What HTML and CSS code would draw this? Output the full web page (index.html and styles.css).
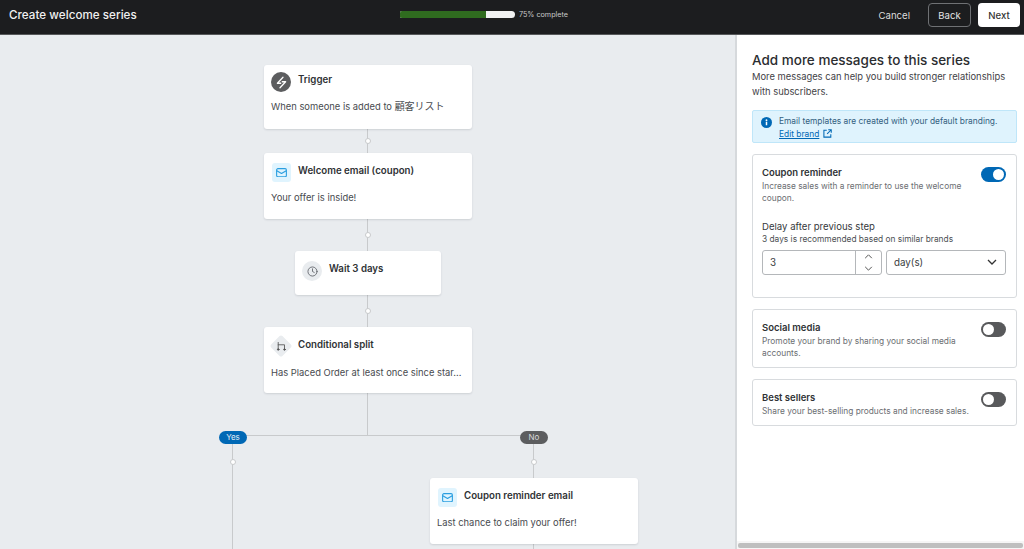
FILE: index.html
```html
<!DOCTYPE html>
<html lang="en">
<head>
<meta charset="utf-8">
<title>Create welcome series</title>
<link rel="stylesheet" href="styles.css">
</head>
<body>
<header class="topbar">
  <div class="title">Create welcome series</div>
  <div class="progress">
    <div class="track"><div class="fill"></div></div>
    <span class="progress-label">75% complete</span>
  </div>
  <div class="actions">
    <span class="cancel">Cancel</span>
    <span class="btn btn-back">Back</span>
    <span class="btn btn-next">Next</span>
  </div>
</header>
<main class="main">
  <section class="canvas">
    <div class="line line-v l1"></div>
    <div class="line line-h l3"></div>
    <div class="line line-v l4"></div>
    <div class="line line-v l5"></div>
    <div class="dot d1"></div>
    <div class="dot d2"></div>
    <div class="dot d3"></div>
    <div class="dot d4"></div>
    <div class="dot d5"></div>
    <div class="pill pill-yes">Yes</div>
    <div class="pill pill-no">No</div>

    <div class="node n-trigger">
      <div class="node-head">
        <span class="ico ico-trigger"><svg viewBox="0 0 20 20" width="15" height="15" fill="none" stroke="#fff" stroke-width="1.7" stroke-linejoin="round" stroke-linecap="round"><path d="M12 3 4.500 11H9M8 17l7.500-8H11"/></svg></span>
        <span class="node-title">Trigger</span>
      </div>
      <div class="node-text">When someone is added to <span class="cjk">顧客リスト</span></div>
    </div>

    <div class="node n-welcome">
      <div class="node-head">
        <span class="ico ico-mail"><svg viewBox="0 0 14 12" width="11" height="9.500" fill="none" stroke="#2a9ee0" stroke-width="1.4" stroke-linejoin="round"><rect x=".8" y=".8" width="12.4" height="10.4" rx="1.6"/><path d="M1 3.400 7 7l6-3.600"/></svg></span>
        <span class="node-title">Welcome email (coupon)</span>
      </div>
      <div class="node-text">Your offer is inside!</div>
    </div>

    <div class="node n-wait">
      <div class="node-head">
        <span class="ico ico-clock"><svg viewBox="0 0 14 14" width="11" height="11" fill="none" stroke="#5f6368" stroke-width="1.1" stroke-linecap="round"><circle cx="7" cy="7" r="5.8"/><path d="M7 3.600V7l2.200 1.200"/></svg></span>
        <span class="node-title">Wait 3 days</span>
      </div>
    </div>

    <div class="node n-split">
      <div class="node-head">
        <span class="ico ico-split"><svg class="split-svg" viewBox="0 0 14 12" width="11" height="10" fill="none" stroke="#555" stroke-width="1.1" stroke-linecap="round" stroke-linejoin="round"><path d="M3 1v9M3 4h8v6"/><circle cx="3" cy="10" r="1" fill="#555"/><circle cx="11" cy="10" r="1" fill="#555"/></svg></span>
        <span class="node-title">Conditional split</span>
      </div>
      <div class="node-text">Has Placed Order at least once since star...</div>
    </div>

    <div class="node n-reminder">
      <div class="node-head">
        <span class="ico ico-mail"><svg viewBox="0 0 14 12" width="11" height="9.500" fill="none" stroke="#2a9ee0" stroke-width="1.4" stroke-linejoin="round"><rect x=".8" y=".8" width="12.4" height="10.4" rx="1.6"/><path d="M1 3.400 7 7l6-3.600"/></svg></span>
        <span class="node-title">Coupon reminder email</span>
      </div>
      <div class="node-text">Last chance to claim your offer!</div>
    </div>
  </section>

  <aside class="panel">
    <h1 class="panel-title">Add more messages to this series</h1>
    <p class="panel-sub">More messages can help you build stronger relationships with subscribers.</p>

    <div class="banner">
      <svg class="banner-ico" viewBox="0 0 12 12" width="11" height="11"><circle cx="6" cy="6" r="6" fill="#0068b5"/><rect x="5.200" y="5.200" width="1.600" height="3.800" fill="#fff"/><circle cx="6" cy="3.500" r="1" fill="#fff"/></svg>
      <div class="banner-text">
        <div>Email templates are created with your default branding.</div>
        <div class="banner-link"><a class="edit-link">Edit brand</a>
          <svg viewBox="0 0 12 12" width="9" height="9" fill="none" stroke="#0068b5" stroke-width="1.4"><path d="M5 1.600H1.200v9.200h9.200V7M7 1h4v4M11 1 5.500 6.500"/></svg>
        </div>
      </div>
    </div>

    <div class="card card-coupon">
      <div class="card-head">
        <div class="card-copy">
          <div class="card-title">Coupon reminder</div>
          <div class="card-desc">Increase sales with a reminder to use the welcome coupon.</div>
        </div>
        <span class="toggle toggle-on"></span>
      </div>
      <div class="delay-title">Delay after previous step</div>
      <div class="delay-sub">3 days is recommended based on similar brands</div>
      <div class="delay-row">
        <div class="field num-field">
          <span class="num-value">3</span>
          <span class="stepper">
            <svg viewBox="0 0 10 6" width="9" height="5" fill="none" stroke="#444" stroke-width="1.1"><path d="M1 5 5 1l4 4"/></svg>
            <svg viewBox="0 0 10 6" width="9" height="5" fill="none" stroke="#444" stroke-width="1.1"><path d="M1 1l4 4 4-4"/></svg>
          </span>
        </div>
        <div class="field sel-field">
          <span>day(s)</span>
          <svg viewBox="0 0 10 6" width="10" height="6" fill="none" stroke="#333" stroke-width="1.3"><path d="M1 1l4 4 4-4"/></svg>
        </div>
      </div>
    </div>

    <div class="card card-social">
      <div class="card-head">
        <div class="card-copy">
          <div class="card-title">Social media</div>
          <div class="card-desc">Promote your brand by sharing your social media accounts.</div>
        </div>
        <span class="toggle"></span>
      </div>
    </div>

    <div class="card card-best">
      <div class="card-head">
        <div class="card-copy wide">
          <div class="card-title">Best sellers</div>
          <div class="card-desc">Share your best-selling products and increase sales.</div>
        </div>
        <span class="toggle"></span>
      </div>
    </div>

    <div class="scrollbar"><div class="thumb"></div></div>
  </aside>
</main>
</body>
</html>
```

FILE: styles.css
```css
* { box-sizing: border-box; }
html, body { margin: 0; height: 100%; overflow: hidden; }
body {
  width: 1024px; height: 549px;
  font-family: Inter, "Noto Sans CJK JP", sans-serif;
  color: #373a3e;
  display: flex; flex-direction: column;
  background: #e9ecef;
}
.topbar {
  height: 35px; flex: none;
  background: #1c1d1f;
  border-bottom: 1px solid #56585a;
  display: flex; align-items: center;
  padding: 0 4px 4px 9px;
  position: relative;
}
.title { color: #f1f1f1; font-size: 11.6px; font-weight: 500; letter-spacing: .05px; }
.progress {
  position: absolute; left: 400px; top: 11px;
  display: flex; align-items: center; gap: 4px;
}
.track { width: 115px; height: 7px; background: #f0f1f2; border-radius: 2px 4px 4px 2px; overflow: hidden; }
.fill { width: 86px; height: 100%; background: #2f6b1f; }
.progress-label { color: #c9c9c9; font-size: 7.2px; line-height: 7px; }
.actions { margin-left: auto; display: flex; align-items: center; }
.cancel { color: #ddd; font-size: 9.6px; margin-right: 18px; }
.btn {
  height: 24px; border-radius: 4px;
  display: flex; align-items: center; justify-content: center;
  font-size: 9.6px;
}
.btn-back { width: 43px; border: 1px solid #6f7174; color: #e4e4e4; margin-right: 7px; }
.btn-next { width: 42px; background: #fff; color: #333; font-weight: 500; }

.main { flex: 1; display: flex; min-height: 0; }
.canvas { width: 735px; flex: none; position: relative; background: #e9ecef; }

.line { position: absolute; background: #c8cacc; }
.line-v { width: 1px; }
.line-h { height: 1px; }
.l1 { left: 367px; top: 93px; height: 307px; }
.l3 { left: 232px; top: 400px; width: 301px; }
.l4 { left: 232px; top: 400px; height: 115px; }
.l5 { left: 533px; top: 400px; height: 115px; }

.dot {
  position: absolute; width: 6px; height: 6px; border-radius: 50%;
  background: #fff; border: 1px solid #c8cacc;
}
.d1 { left: 365px; top: 103px; }
.d2 { left: 365px; top: 197px; }
.d3 { left: 365px; top: 273px; }
.d4 { left: 230px; top: 424px; }
.d5 { left: 531px; top: 424px; }

.pill {
  position: absolute; top: 396px; width: 28px; height: 13px;
  border-radius: 7px; color: #e6eef5;
  font-size: 8px; line-height: 13px; text-align: center;
}
.pill-yes { left: 219px; background: #0068b5; }
.pill-no { left: 520px; background: #5c5d5f; color: #d8d8d8; }

.node {
  position: absolute; background: #fff; border-radius: 3px;
  box-shadow: 0 1px 2px rgba(60, 70, 80, .16);
  padding: 7px 7px 0;
}
.n-trigger { left: 264px; top: 30px; width: 208px; height: 64px; }
.n-welcome { left: 264px; top: 118px; width: 208px; height: 66px; padding-top: 10px; }
.n-wait { left: 295px; top: 216px; width: 146px; height: 44px; padding-top: 10px; }
.n-split { left: 264px; top: 292px; width: 208px; height: 66px; padding-top: 9px; }
.n-reminder { left: 430px; top: 443px; width: 208px; height: 66px; padding-top: 10px; }

.node-head { display: flex; align-items: flex-start; height: 21px; }
.n-trigger .node-head { height: 20px; }
.node-title { font-size: 9.7px; font-weight: 600; color: #2f3235; line-height: 12px; margin-left: 7px; padding-top: 2px; }
.n-split .node-title { padding-top: 3px; }
.node-text { font-size: 9.4px; line-height: 12px; color: #484b4f; margin-top: 8px; white-space: nowrap; }
.cjk { font-size: 10px; }
.n-split .node-text { margin-top: 10px; }

.ico { width: 20px; height: 20px; flex: none; display: flex; align-items: center; justify-content: center; }
.ico-trigger { background: #5c5d5f; border-radius: 50%; }
.ico-mail { width: 19px; height: 19px; margin-left: 1px; background: #e0f4fe; border-radius: 3px; }
.ico-clock { background: #e9ecef; border-radius: 50%; }
.ico-split { background: #e9ecef; width: 16px; height: 16px; margin: 2px; border-radius: 2px; transform: rotate(45deg); }
.split-svg { transform: rotate(-45deg); flex: none; }

.panel {
  flex: 1; min-width: 0; position: relative; background: #fff;
  border-left: 2px solid #d6d9dc;
  padding: 16px 7px 0 15px;
}
.panel-title { margin: 0; font-size: 13.5px; font-weight: 500; line-height: 18px; color: #2b2d30; }
.panel-sub { margin: 0; font-size: 9.4px; line-height: 15px; color: #3f4246; }

.banner {
  margin-top: 11px; height: 33px;
  background: #dff3fd; border: 1px solid #bfe6f9; border-radius: 2px;
  display: flex; align-items: flex-start;
  padding: 6px 0 0 8px;
}
.banner-ico { flex: none; }
.banner-text { margin-left: 7px; font-size: 8.4px; line-height: 12.5px; color: #33607f; white-space: nowrap; margin-top: -2px; }
.banner-link { display: flex; align-items: center; gap: 4px; }
.edit-link { color: #0068b5; text-decoration: underline; }

.card {
  margin-top: 11px; border: 1px solid #d8dbde; border-radius: 3px;
  padding: 11px 10px 0 9px;
  background: #fff;
}
.card-coupon { height: 144px; }
.card-social { height: 59px; }
.card-best { height: 47px; }
.card-head { display: flex; justify-content: space-between; align-items: flex-start; }
.card-copy { width: 205px; }
.card-copy.wide { width: 215px; }
.card-title { font-size: 9.5px; font-weight: 600; line-height: 13px; color: #2f3235; }
.card-desc { font-size: 8.35px; line-height: 12.7px; color: #6b6e72; margin-top: .5px; }
.toggle {
  flex: none; width: 25px; height: 15px; border-radius: 8px;
  background: #58595b; position: relative; margin-top: 1px;
}
.toggle::after {
  content: ""; position: absolute; left: 2px; top: 2px;
  width: 11px; height: 11px; border-radius: 50%; background: #fff;
}
.toggle-on { background: #0068b5; }
.toggle-on::after { left: 12px; }
.delay-title { margin-top: 15px; font-size: 9.6px; line-height: 13px; color: #36393c; }
.delay-sub { font-size: 8.35px; line-height: 12px; color: #4c4f53; }
.delay-row { display: flex; gap: 4px; margin-top: 5px; }
.field {
  height: 25px; border: 1px solid #b4b7ba; border-radius: 3px;
  display: flex; align-items: center; font-size: 9.8px; color: #3b3e41;
}
.num-field { width: 120px; flex: none; padding-left: 7px; justify-content: space-between; }
.stepper {
  width: 26px; height: 23px; border-left: 1px solid #b4b7ba;
  display: flex; flex-direction: column; align-items: center; justify-content: center; gap: 7px;
}
.sel-field { flex: 1; padding: 0 8px 0 7px; justify-content: space-between; }
.scrollbar { position: absolute; left: 0; right: 0; bottom: 0; height: 8px; background: #f6f6f6; padding: 2px 1px 1px 1px; }
.thumb { height: 5px; background: #bfbfbf; border-radius: 2px; }
```
